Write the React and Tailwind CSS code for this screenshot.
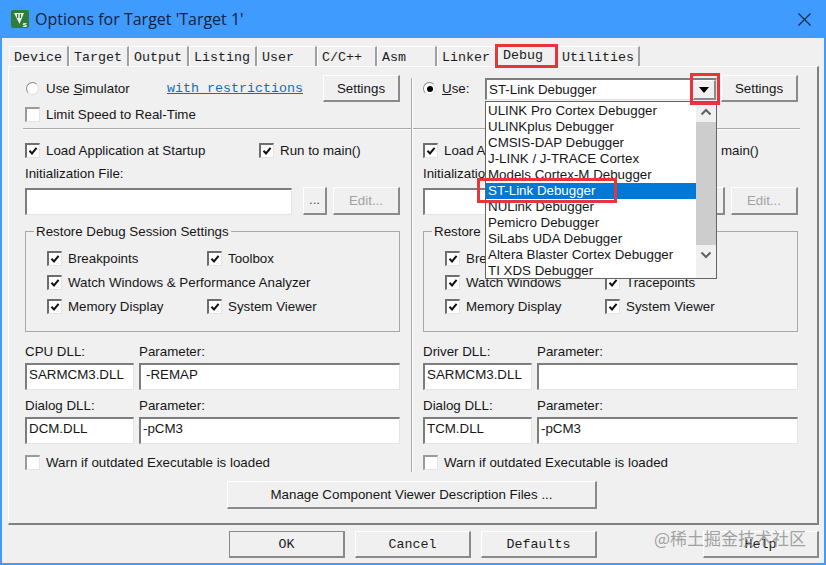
import React from "react";

const TABS = [
  { label: "Device", w: "w-[60px]" },
  { label: "Target", w: "w-[60px]" },
  { label: "Output", w: "w-[60px]" },
  { label: "Listing", w: "w-[68px]" },
  { label: "User", w: "w-[60px]" },
  { label: "C/C++", w: "w-[60px]" },
  { label: "Asm", w: "w-[60px]" },
  { label: "Linker", w: "w-[61px]" },
  { label: "Debug", w: "w-[59px]", active: true },
  { label: "Utilities", w: "w-[83px]" },
];

const DEBUGGERS = [
  "ULINK Pro Cortex Debugger",
  "ULINKplus Debugger",
  "CMSIS-DAP Debugger",
  "J-LINK / J-TRACE Cortex",
  "Models Cortex-M Debugger",
  "ST-Link Debugger",
  "NULink Debugger",
  "Pemicro Debugger",
  "SiLabs UDA Debugger",
  "Altera Blaster Cortex Debugger",
  "TI XDS Debugger",
];

const raised = "border-t border-l border-t-white border-l-white border-r-2 border-b-2 border-r-[#8a8a8a] border-b-[#8a8a8a] bg-[#f0f0f0]";
const sunken = "border-t-2 border-l-2 border-t-[#7d7d7d] border-l-[#7d7d7d] border-r border-b border-r-[#e4e4e4] border-b-[#e4e4e4] bg-white";
const mono = "font-['Liberation_Mono',monospace] text-[13.33px] text-[#1c1c1c]";

function Check({ checked, dim }) {
  return (
    <span className={`flex h-[15px] w-[15px] shrink-0 items-center justify-center bg-white border-r border-b border-r-[#e4e4e4] border-b-[#e4e4e4] border-t-2 border-l-2 ${dim ? "border-t-[#9a9a9a] border-l-[#9a9a9a]" : "border-t-[#6e6e6e] border-l-[#6e6e6e]"}`}>
      {checked && (
        <svg width="10" height="10" viewBox="0 0 10 10">
          <path d="M1.5 4.8 L4 7.4 L8.6 1.8" fill="none" stroke="#111" strokeWidth="2" />
        </svg>
      )}
    </span>
  );
}

function CheckRow({ label, checked, dim, className = "" }) {
  return (
    <div className={`flex h-[15px] items-center ${className}`}>
      <Check checked={checked} dim={dim} />
      <span className="ml-[6px] whitespace-nowrap">{label}</span>
    </div>
  );
}

function Radio({ selected }) {
  return (
    <span className="flex h-[13px] w-[13px] shrink-0 items-center justify-center rounded-full border border-[#8a8a8a] border-r-[#dedede] border-b-[#dedede] bg-white">
      {selected && <span className="h-[6px] w-[6px] rounded-full bg-black" />}
    </span>
  );
}

function Btn({ children, className = "", disabled }) {
  return (
    <div className={`flex shrink-0 items-center justify-center pt-px ${raised} ${disabled ? "text-[#a3a3a3]" : ""} ${className}`}>
      {children}
    </div>
  );
}

function Field({ children, className = "" }) {
  return <div className={`h-[27px] shrink-0 overflow-hidden leading-[19px] whitespace-pre ${sunken} ${className}`}>{children}</div>;
}

function Column({ top, cpuLabel, cpuParam, dialogDll, rule, rowTwoLeft, rowTwoRight, className }) {
  return (
    <div className={`flex shrink-0 flex-col pt-[8px] ${className}`}>
      {top}
      <div className={`mt-[6px] h-[2px] border-t border-b border-t-[#a8a8a8] border-b-white ${rule}`} />
      <div className="mt-[13px] flex">
        <CheckRow className="w-[234px]" checked label="Load Application at Startup" />
        <CheckRow checked label="Run to main()" />
      </div>
      <div className="mt-[7px] h-[16px] pt-px leading-[16px]">Initialization File:</div>
      <div className="mt-[7px] flex">
        <Field className="w-[267px]" />
        <Btn className="ml-[11px] mt-[-1px] h-[28px] w-[24px] pb-[2px] text-[#555]">...</Btn>
        <Btn disabled className="ml-[6px] mt-[-1px] h-[28px] w-[67px]">Edit...</Btn>
      </div>
      <div className="relative mt-[16px] h-[101px] w-[375px] border border-[#a8a8a8] pt-[19px] pl-[21px]">
        <span className="absolute -top-[8px] left-[8px] bg-[#f0f0f0] px-[2px] leading-[16px]">Restore Debug Session Settings</span>
        <div className="flex flex-col gap-[9px]">
          <div className="flex">
            <CheckRow className="w-[160px]" checked label="Breakpoints" />
            <CheckRow checked label="Toolbox" />
          </div>
          <div className="flex">
            <CheckRow className="w-[160px]" checked label={rowTwoLeft} />
            {rowTwoRight && <CheckRow checked label={rowTwoRight} />}
          </div>
          <div className="flex">
            <CheckRow className="w-[160px]" checked label="Memory Display" />
            <CheckRow checked label="System Viewer" />
          </div>
        </div>
      </div>
      <div className="mt-[11px] flex h-[16px] pt-px leading-[16px]">
        <span className="w-[114px]">{cpuLabel}</span>
        <span>Parameter:</span>
      </div>
      <div className="mt-[4px] flex gap-[5px]">
        <Field className="w-[109px] pl-[2px]">{"SARMCM3.DLL"}</Field>
        <Field className="w-[261px] pl-[5px]">{cpuParam}</Field>
      </div>
      <div className="mt-[7px] flex h-[16px] pt-px leading-[16px]">
        <span className="w-[114px]">Dialog DLL:</span>
        <span>Parameter:</span>
      </div>
      <div className="mt-[4px] flex gap-[5px]">
        <Field className="w-[109px] pl-[2px]">{dialogDll}</Field>
        <Field className="w-[261px] pl-[2px]">-pCM3</Field>
      </div>
      <CheckRow className="mt-[11px]" dim label="Warn if outdated Executable is loaded" />
    </div>
  );
}

function DropList() {
  return (
    <div className="absolute left-[485px] top-[101px] flex h-[178px] w-[232px] border border-[#646464] bg-white">
      <ul className="w-[210px] pt-px">
        {DEBUGGERS.map(d => (
          <li
            key={d}
            className={`h-[16px] pl-[2px] leading-[16px] whitespace-nowrap ${d === "ST-Link Debugger" ? "bg-[#0078d7] text-white" : ""}`}
          >
            {d}
          </li>
        ))}
      </ul>
      <div className="flex w-[20px] flex-col items-center bg-[#f0f0f0]">
        <svg className="mt-[6px]" width="12" height="8" viewBox="0 0 12 8">
          <path d="M1.5 6.5 L6 2 L10.5 6.5" fill="none" stroke="#606060" strokeWidth="2" />
        </svg>
        <div className="mt-[6px] h-[123px] w-full bg-[#cdcdcd]" />
        <svg className="mt-[6px]" width="12" height="8" viewBox="0 0 12 8">
          <path d="M1.5 1.5 L6 6 L10.5 1.5" fill="none" stroke="#606060" strokeWidth="2" />
        </svg>
      </div>
    </div>
  );
}

export default function App() {
  return (
    <div className="relative flex h-[565px] w-[826px] flex-col overflow-hidden bg-[#3f9bfd] font-['Liberation_Sans',sans-serif] text-[13.33px] text-[#161616]">
      {/* title bar */}
      <div className="flex h-[38px] shrink-0 items-center pl-[11px] pr-[15px]">
        <svg width="18" height="18" viewBox="0 0 18 18">
          <rect width="18" height="18" rx="2" fill="#2f7d3a" />
          <path d="M3 3 H13 L8.5 14 Z" fill="#e9f3e6" />
          <path d="M6.6 4 V8 M9.4 4 V8" stroke="#2f7d3a" strokeWidth="1.2" />
          <text x="11.5" y="16.5" fontSize="8" fontWeight="700" fill="#fff" fontFamily="Liberation Sans, sans-serif">s</text>
        </svg>
        <span className="ml-[6px] font-['Open_Sans',sans-serif] text-[16px] text-[#10233a]">Options for Target 'Target 1'</span>
        <svg className="ml-auto" width="13" height="13" viewBox="0 0 13 13">
          <path d="M0.5 0.5 L12.5 12.5 M12.5 0.5 L0.5 12.5" stroke="#10233a" strokeWidth="1.1" />
        </svg>
      </div>

      {/* client area */}
      <div className="mx-[2px] mb-[2px] flex flex-1 flex-col bg-[#f0f0f0] pl-[6px] pr-[5px] pt-[8px]">
        <div className="flex h-[20px] pl-px">
          {TABS.map(t => (
            <div
              key={t.label}
              className={`h-[21px] shrink-0 pl-[4px] leading-[20px] border-t border-t-white border-l border-l-white ${t.w} ${mono} ${t.active ? "-mt-[1px] bg-[#f0f0f0]" : "pt-px border-r-2 border-r-[#a0a0a0]"}`}
            >
              {t.label}
            </div>
          ))}
        </div>

        {/* tab panel */}
        <div className="flex h-[459px] flex-col border-t border-l border-t-white border-l-white border-r-2 border-b-2 border-r-[#808080] border-b-[#808080]">
          <div className="flex h-[405px]">
            <Column
              className="w-[402px] pl-[16px] pr-[11px]"
              rule="-ml-[2px] -mr-[11px]"
              cpuLabel="CPU DLL:"
              cpuParam="-REMAP"
              dialogDll="DCM.DLL"
              rowTwoLeft="Watch Windows & Performance Analyzer"
              top={
                <>
                  <div className="flex h-[27px] items-center">
                    <span className="ml-px"><Radio /></span>
                    <span className="ml-[7px] w-[121px]">Use <u>S</u>imulator</span>
                    <span className={`${mono} text-[#0a6fc2]! underline`}>with restrictions</span>
                    <Btn className="ml-auto h-[27px] w-[77px]">Settings</Btn>
                  </div>
                  <CheckRow className="mt-[5px]" dim label="Limit Speed to Real-Time" />
                </>
              }
            />
            {/* divider between the two columns */}
            <div className="mt-[11px] w-[2px] shrink-0 border-l border-r border-l-[#a8a8a8] border-r-white" />
            <Column
              className="w-[404px] pl-[10px] pr-[19px]"
              rule="-ml-[10px] -mr-[2px]"
              cpuLabel="Driver DLL:"
              cpuParam=""
              dialogDll="TCM.DLL"
              rowTwoLeft="Watch Windows"
              rowTwoRight="Tracepoints"
              top={
                <>
                  <div className="flex h-[27px] items-center">
                    <Radio selected />
                    <span className="ml-[6px] w-[43px]"><u>U</u>se:</span>
                    <div className={`mt-[1px] flex h-[22px] w-[232px] shrink-0 items-center pl-[2px] ${sunken}`}>
                      ST-Link Debugger
                      <Btn className="ml-auto h-[20px] w-[23px]">
                        <svg width="10" height="6" viewBox="0 0 10 6"><path d="M0 0 H10 L5 6 Z" fill="#000" /></svg>
                      </Btn>
                    </div>
                    <Btn className="ml-auto h-[27px] w-[77px]">Settings</Btn>
                  </div>
                  <div className="mt-[5px] h-[15px]" />
                </>
              }
            />
          </div>
          <Btn className="ml-[218px] mt-[9px] h-[28px] w-[370px]">Manage Component Viewer Description Files ...</Btn>
        </div>

        {/* footer buttons */}
        <div className={`mt-[6px] flex ${mono}`}>
          <Btn className="ml-[221px] h-[27px] w-[116px] pt-[2px] border-t-[#8a8a8a]! border-l-[#8a8a8a]!">OK</Btn>
          <Btn className="ml-[10px] h-[27px] w-[116px] pt-[2px]">Cancel</Btn>
          <Btn className="ml-[10px] h-[27px] w-[116px] pt-[2px]">Defaults</Btn>
          <Btn className="ml-[106px] h-[27px] w-[116px] pt-[2px]">Help</Btn>
        </div>
      </div>

      {/* open dropdown */}
      <DropList />

      {/* annotation boxes */}
      <div className="absolute left-[495px] top-[44px] h-[24px] w-[63px] border-[3px] border-[#e8353b]" />
      <div className="absolute left-[690px] top-[73px] h-[32px] w-[30px] border-[3px] border-[#e8353b]" />
      <div className="absolute left-[477px] top-[178px] h-[25px] w-[140px] border-[3px] border-[#e8353b]" />

      {/* watermark */}
      <span className="absolute left-[654px] top-[527px] font-['Noto_Sans_CJK_SC',sans-serif] text-[17px] leading-[22px] text-[#8c8c8c]/80">@稀土掘金技术社区</span>
    </div>
  );
}
